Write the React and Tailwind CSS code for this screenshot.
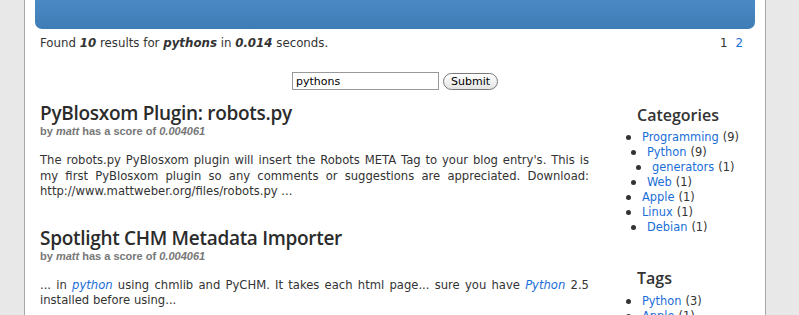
import React from 'react';

const categories = [
  { name: 'Programming', count: 9, level: 0 },
  { name: 'Python', count: 9, level: 1 },
  { name: 'generators', count: 1, level: 2 },
  { name: 'Web', count: 1, level: 1 },
  { name: 'Apple', count: 1, level: 0 },
  { name: 'Linux', count: 1, level: 0 },
  { name: 'Debian', count: 1, level: 1 },
];

const tags = [
  { name: 'Python', count: 3, level: 0 },
  { name: 'Apple', count: 1, level: 0 },
];

const indent = { 0: 'pl-0', 1: 'pl-[5px]', 2: 'pl-[10px]' };

const SideList = ({ items, className = 'mt-[5px]' }) => (
  <ul className={`text-[11.4px] ${className}`}>
    {items.map((item, i) => (
      <li key={i} className={`flex items-center h-[15px] ${indent[item.level]}`}>
        <span className="w-[5px] h-[5px] rounded-full bg-[#333] mr-[11px]" />
        <a href="#" className="text-[#1a6ed8]">{item.name}</a>
        <span className="ml-[4px]">({item.count})</span>
      </li>
    ))}
  </ul>
);

const Line = ({ children }) => (
  <span className="block whitespace-nowrap text-justify [text-align-last:justify]">{children}</span>
);

const Byline = () => (
  <div className="font-['Liberation_Sans',Arial,sans-serif] font-bold text-[11px] text-[#777] leading-[13px]">
    by <i>matt</i> has a score of <i>0.004061</i>
  </div>
);

const Title = ({ children, className = '' }) => (
  <h2 className={`font-['Open_Sans',sans-serif] text-[19px] tracking-[-0.3px] font-semibold leading-[24px] text-[#2b2b2b] ${className}`}>
    {children}
  </h2>
);

export default function App() {
  return (
    <div className="min-h-screen bg-[#e8e8e8] font-['DejaVu_Sans',sans-serif] text-[#333] text-[11.8px]">
      <div className="ml-[24px] w-[742px] min-h-[315px] bg-white border-x border-[#a8a8a8]">
        <div className="mx-[10px] h-[29px] rounded-b-[7px] bg-linear-to-b from-[#4a8ac4] to-[#3e7cb5]" />

        <div className="flex justify-between pl-[15px] pr-[22px] mt-[7px] leading-[15px]">
          <div>
            Found <b><i>10</i></b> results for <b><i>pythons</i></b> in <b><i>0.014</i></b> seconds.
          </div>
          <div className="flex gap-[8px]">
            <span>1</span>
            <a href="#" className="text-[#1a6ed8]">2</a>
          </div>
        </div>

        <div className="flex justify-center items-center mt-[21px] gap-[4px]">
          <input
            defaultValue="pythons"
            className="w-[147px] h-[18px] border border-[#999] px-[3px] text-[11px] text-black outline-none"
          />
          <button className="h-[17px] px-[7px] rounded-full border border-[#777] bg-linear-to-b from-white to-[#e4e4e4] text-[11px] text-black leading-none">
            Submit
          </button>
        </div>

        <div className="flex pl-[15px] mt-[11px]">
          <div className="w-[549px]">
            <Title>PyBlosxom Plugin: robots.py</Title>
            <Byline />
            <p className="mt-[15px] leading-[15.5px] text-[11.6px]">
              <Line>The robots.py PyBlosxom plugin will insert the Robots META Tag to your blog entry's. This is</Line>
              <Line>my first PyBlosxom plugin so any comments or suggestions are appreciated. Download:</Line>
              <span className="block">http://www.mattweber.org/files/robots.py ...</span>
            </p>

            <Title className="mt-[26px]">Spotlight CHM Metadata Importer</Title>
            <Byline />
            <p className="mt-[15px] leading-[15.5px] text-[11.6px]">
              <Line>
                ... in <a href="#" className="italic text-[#1a6ed8]">python</a> using chmlib and PyCHM. It takes each html page... sure you have <a href="#" className="italic text-[#1a6ed8]">Python</a> 2.5
              </Line>
              <span className="block">installed before using...</span>
            </p>
          </div>

          <div className="ml-[37px] mt-[4px]">
            <h3 className="ml-[11px] font-['Open_Sans',sans-serif] text-[16px] font-semibold leading-[20px]">Categories</h3>
            <SideList items={categories} />
            <h3 className="ml-[11px] font-['Open_Sans',sans-serif] text-[16px] font-semibold leading-[20px] mt-[33px]">Tags</h3>
            <SideList items={tags} className="mt-[6px]" />
          </div>
        </div>
      </div>
    </div>
  );
}
